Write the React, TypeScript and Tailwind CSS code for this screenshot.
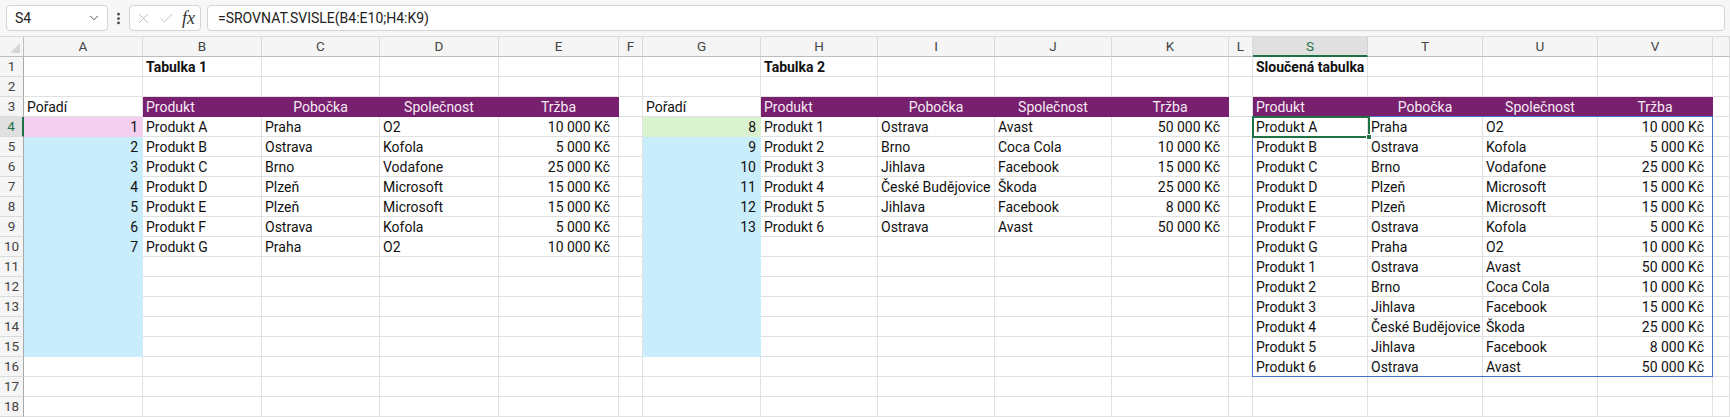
import React from 'react';
import { Check, ChevronDown, EllipsisVertical, X } from 'lucide-react';

type Fill = 'purple' | 'pink' | 'blue' | 'green';

interface Cell {
  v?: string;
  align?: 'l' | 'r' | 'c' | 'money';
  bold?: boolean;
  fill?: Fill;
}

const columns = ['A', 'B', 'C', 'D', 'E', 'F', 'G', 'H', 'I', 'J', 'K', 'L', 'S', 'T', 'U', 'V', 'W'];
const rowCount = 18;

const table1 = [
  ['Produkt A', 'Praha', 'O2', '10 000 Kč'],
  ['Produkt B', 'Ostrava', 'Kofola', '5 000 Kč'],
  ['Produkt C', 'Brno', 'Vodafone', '25 000 Kč'],
  ['Produkt D', 'Plzeň', 'Microsoft', '15 000 Kč'],
  ['Produkt E', 'Plzeň', 'Microsoft', '15 000 Kč'],
  ['Produkt F', 'Ostrava', 'Kofola', '5 000 Kč'],
  ['Produkt G', 'Praha', 'O2', '10 000 Kč'],
];

const table2 = [
  ['Produkt 1', 'Ostrava', 'Avast', '50 000 Kč'],
  ['Produkt 2', 'Brno', 'Coca Cola', '10 000 Kč'],
  ['Produkt 3', 'Jihlava', 'Facebook', '15 000 Kč'],
  ['Produkt 4', 'České Budějovice', 'Škoda', '25 000 Kč'],
  ['Produkt 5', 'Jihlava', 'Facebook', '8 000 Kč'],
  ['Produkt 6', 'Ostrava', 'Avast', '50 000 Kč'],
];

const headerRow = ['Produkt', 'Pobočka', 'Společnost', 'Tržba'];

// build the sheet contents, keyed like "B4"
const buildSheet = () => {
  const cells: Record<string, Cell> = {};
  const putTable = (cols: string[], rows: string[][], startRow: number) => {
    rows.forEach((r, i) =>
      r.forEach((v, j) => {
        cells[cols[j] + (startRow + i)] = { v, align: j === 3 ? 'money' : 'l' };
      })
    );
  };
  const putHeader = (cols: string[], title: string) => {
    cells[cols[0] + '1'] = { v: title, bold: true };
    headerRow.forEach((v, j) => {
      cells[cols[j] + '3'] = { v, align: j === 0 ? 'l' : 'c', fill: 'purple' };
    });
  };

  putHeader(['B', 'C', 'D', 'E'], 'Tabulka 1');
  putHeader(['H', 'I', 'J', 'K'], 'Tabulka 2');
  putHeader(['S', 'T', 'U', 'V'], 'Sloučená tabulka');
  putTable(['B', 'C', 'D', 'E'], table1, 4);
  putTable(['H', 'I', 'J', 'K'], table2, 4);
  putTable(['S', 'T', 'U', 'V'], [...table1, ...table2], 4);

  cells['A3'] = { v: 'Pořadí' };
  cells['G3'] = { v: 'Pořadí' };
  for (let r = 4; r <= 15; r++) {
    const a = r - 3;
    const g = r - 3 + 7;
    cells['A' + r] = { v: a <= 7 ? String(a) : '', align: 'r', fill: r === 4 ? 'pink' : 'blue' };
    cells['G' + r] = { v: g <= 13 ? String(g) : '', align: 'r', fill: r === 4 ? 'green' : 'blue' };
  }
  return cells;
};

const sheet = buildSheet();

const fillClass: Record<Fill | 'none', string> = {
  none: 'bg-white border-[#e1e1e1] text-[#111]',
  purple: 'bg-[#78206e] border-[#78206e] text-[#f5ebf4]',
  pink: 'bg-[#f2ceef] border-[#f2ceef] text-[#111]',
  blue: 'bg-[#caedfb] border-[#caedfb] text-[#111]',
  green: 'bg-[#daf2d0] border-[#daf2d0] text-[#111]',
};

const alignClass = {
  l: 'justify-start pl-[3px] pr-[2px]',
  r: 'justify-end pl-[2px] pr-[4px]',
  c: 'justify-center px-[3px]',
  money: 'justify-end pl-[2px] pr-[8px]',
};

const SheetCell: React.FC<{ cell?: Cell }> = ({ cell }) => {
  const fill = cell?.fill ?? 'none';
  return (
    <div
      className={`flex items-end h-[20px] border-r border-b overflow-hidden whitespace-nowrap text-[14px] leading-[17px] ${fillClass[fill]} ${alignClass[cell?.align ?? 'l']} ${cell?.bold ? 'font-bold' : ''}`}
    >
      {cell?.v}
    </div>
  );
};

const FormulaBar = () => (
  <div className="flex items-center h-[37px] pl-[6px] pr-[5px] bg-[#f7f7f7] border-b border-[#dadada]">
    <div className="flex items-center justify-between w-[102px] h-[26px] pl-[8px] pr-[6px] bg-white border border-[#d4d4d4] rounded-[4px] text-[14px] text-[#222]">
      <span>S4</span>
      <ChevronDown size={14} strokeWidth={1.6} className="text-[#444]" />
    </div>
    <div className="flex justify-center w-[21px]">
      <EllipsisVertical size={15} strokeWidth={2.4} className="text-[#444]" />
    </div>
    <div className="flex items-center gap-[6px] w-[72px] h-[26px] pl-[5px] bg-white border border-[#d4d4d4] rounded-[4px]">
      <X size={17} strokeWidth={1.2} className="text-[#b4b4b4]" />
      <Check size={17} strokeWidth={1.2} className="text-[#b4b4b4]" />
      <span className="ml-[1px] font-['Liberation_Serif',serif] italic text-[18px] leading-none text-[#333]">fx</span>
    </div>
    <div className="flex items-center flex-1 h-[26px] ml-[6px] pl-[10px] bg-white border border-[#d4d4d4] rounded-[4px] text-[14px] text-[#222]">
      =SROVNAT.SVISLE(B4:E10;H4:K9)
    </div>
  </div>
);

export default function App() {
  return (
    <div className="w-[1730px] h-[417px] overflow-hidden bg-white font-['Roboto','Noto_Sans',sans-serif]">
      <FormulaBar />
      <div className="relative">
        <div className="grid grid-cols-[24px_119px_119px_118px_119px_120px_24px_118px_117px_117px_117px_117px_24px_115px_115px_115px_115px_1fr] auto-rows-[20px]">
          {/* column headers */}
          <div className="relative h-[20px] bg-[#f5f5f5] border-r border-b border-[#bdbdbd]">
            <svg className="absolute right-[3px] bottom-[3px]" width="10" height="10" viewBox="0 0 10 10">
              <path d="M10 0 L10 10 L0 10 Z" fill="#d6d6d6" />
            </svg>
          </div>
          {columns.map((c) =>
            c === 'S' ? (
              <div
                key={c}
                className="flex items-center justify-center h-[20px] bg-[#e0e0e0] border-r border-[#d4d4d4] border-b-2 border-b-[#1f7145] text-[13.5px] text-[#1f7145]"
              >
                {c}
              </div>
            ) : (
              <div
                key={c}
                className="flex items-center justify-center h-[20px] bg-[#f5f5f5] border-r border-b border-r-[#dadada] border-b-[#bdbdbd] text-[13.5px] text-[#444]"
              >
                {c === 'W' ? '' : c}
              </div>
            )
          )}

          {Array.from({ length: rowCount }, (_, i) => i + 1).map((r) => (
            <React.Fragment key={r}>
              {r === 4 ? (
                <div className="flex items-center justify-center h-[20px] bg-[#e0e0e0] border-b border-b-[#dadada] border-r-2 border-r-[#1f7145] text-[13.5px] text-[#1f7145]">
                  {r}
                </div>
              ) : (
                <div className="flex items-center justify-center h-[20px] bg-[#f5f5f5] border-b border-r border-b-[#dadada] border-r-[#a8a8a8] text-[13.5px] text-[#444]">
                  {r}
                </div>
              )}
              {columns.map((c) => (
                <SheetCell key={c + r} cell={sheet[c + r]} />
              ))}
            </React.Fragment>
          ))}
        </div>

        {/* spill range of the merged table */}
        <div className="absolute left-[1252px] top-[79px] w-[461px] h-[261px] border border-[#4a73c7] pointer-events-none" />
        {/* active cell S4 */}
        <div className="absolute left-[1252px] top-[79px] w-[118px] h-[22px] border-2 border-[#1f7145] pointer-events-none">
          <div className="absolute right-[-4px] bottom-[-4px] w-[6px] h-[6px] bg-[#1f7145] border border-white" />
        </div>
      </div>
    </div>
  );
}
